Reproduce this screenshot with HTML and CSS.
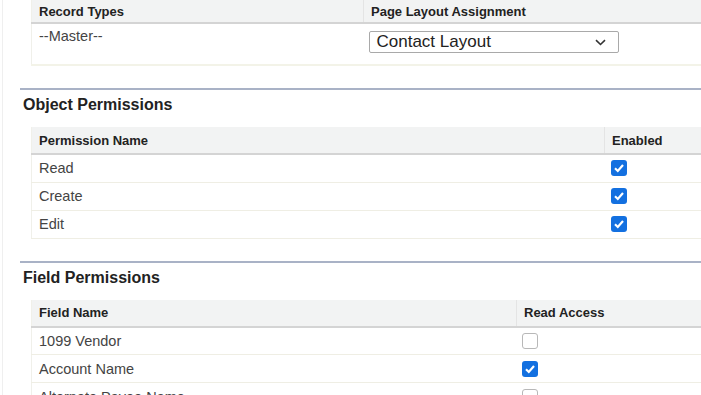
FILE: index.html
```html
<!DOCTYPE html>
<html lang="en">
<head>
  <meta charset="UTF-8">
  <meta name="viewport" content="width=device-width, initial-scale=1.0">
  <title>Profile Settings</title>
  <link rel="stylesheet" href="styles.css">
</head>
<body>
  <div class="page">

    <table class="grid layouts">
      <tr>
        <th class="first">Record Types</th>
        <th>Page Layout Assignment</th>
      </tr>
      <tr>
        <td class="master">--Master--</td>
        <td class="master">
          <div class="select">
            <span>Contact Layout</span>
            <svg class="chevron" width="11" height="7" viewBox="0 0 11 7">
              <path d="M1 1.2 L5.5 5.5 L10 1.2" fill="none" stroke="#333" stroke-width="1.6"/>
            </svg>
          </div>
        </td>
      </tr>
    </table>

    <div class="section">
      <h3>Object Permissions</h3>
      <table class="grid objects">
        <tr>
          <th class="first">Permission Name</th>
          <th>Enabled</th>
        </tr>
        <tr>
          <td>Read</td>
          <td><span class="box checked"><svg width="16" height="16" viewBox="0 0 16 16"><path d="M4 8.3 L6.8 11 L12 5" fill="none" stroke="#fff" stroke-width="2.2"/></svg></span></td>
        </tr>
        <tr>
          <td>Create</td>
          <td><span class="box checked"><svg width="16" height="16" viewBox="0 0 16 16"><path d="M4 8.3 L6.8 11 L12 5" fill="none" stroke="#fff" stroke-width="2.2"/></svg></span></td>
        </tr>
        <tr>
          <td>Edit</td>
          <td><span class="box checked"><svg width="16" height="16" viewBox="0 0 16 16"><path d="M4 8.3 L6.8 11 L12 5" fill="none" stroke="#fff" stroke-width="2.2"/></svg></span></td>
        </tr>
      </table>
    </div>

    <div class="section">
      <h3>Field Permissions</h3>
      <table class="grid fields">
        <tr>
          <th class="first">Field Name</th>
          <th>Read Access</th>
        </tr>
        <tr>
          <td>1099 Vendor</td>
          <td><span class="box"></span></td>
        </tr>
        <tr>
          <td>Account Name</td>
          <td><span class="box checked"><svg width="16" height="16" viewBox="0 0 16 16"><path d="M4 8.3 L6.8 11 L12 5" fill="none" stroke="#fff" stroke-width="2.2"/></svg></span></td>
        </tr>
        <tr>
          <td>Alternate Payee Name</td>
          <td><span class="box"></span></td>
        </tr>
      </table>
    </div>

  </div>
</body>
</html>
```

FILE: styles.css
```css
html, body {
  margin: 0;
  height: 100%;
  overflow: hidden;
  background: #fff;
}

body {
  font-family: "Liberation Sans", Arial, sans-serif;
  color: #444;
}

.page {
  margin-left: 2px;
  padding-left: 17px;
  min-height: 100%;
  border-left: 1px solid #efefef;
}

.grid {
  border-collapse: collapse;
  table-layout: fixed;
  width: 700px;
  margin-left: 11px;
  border-left: 1px solid #f0f0ea;
}

.grid th {
  background: #f2f3f3;
  color: #222;
  font-size: 13px;
  font-weight: bold;
  text-align: left;
  height: 24px;
  padding: 0 7px;
  box-sizing: border-box;
  border-bottom: 2px solid #d4d4d4;
  border-left: 1px solid #e4e4e4;
}

.grid th.first {
  border-left: none;
}

.grid td {
  font-size: 14.5px;
  height: 28px;
  padding: 0 7px;
  box-sizing: border-box;
  border-bottom: 1px solid #efeee4;
  vertical-align: middle;
}

.layouts th {
  height: 23px;
}

.layouts th.first {
  width: 332px;
}

.objects th.first {
  width: 573px;
  height: 27px;
}

.fields th.first {
  width: 485px;
  height: 27px;
}

.grid td.master {
  height: 42px;
  vertical-align: top;
  padding-top: 3px;
  line-height: 18px;
  border-bottom: 2px solid #f3f3e8;
}

.select {
  display: flex;
  align-items: center;
  width: 250px;
  height: 22px;
  margin-top: 4px;
  margin-left: -2px;
  box-sizing: border-box;
  padding: 0 12px 0 7px;
  border: 1px solid #a9a9a9;
  border-radius: 2px;
  font-size: 17px;
  color: #222;
}

.chevron {
  margin-left: auto;
}

.section {
  margin-top: 22px;
  border-top: 2px solid #a9b2c6;
}

.section h3 {
  margin: 6px 0 13px 3px;
  font-size: 16px;
  line-height: 18px;
  color: #222;
}

.box {
  display: block;
  width: 16px;
  height: 16px;
  margin-left: -1px;
  box-sizing: border-box;
  border: 1px solid #b8b8b8;
  border-radius: 3px;
  background: #fff;
}

.box.checked {
  border: none;
  background: #1370e0;
}

.box svg {
  display: block;
}

.fields .box {
  margin-left: -2px;
}
```
